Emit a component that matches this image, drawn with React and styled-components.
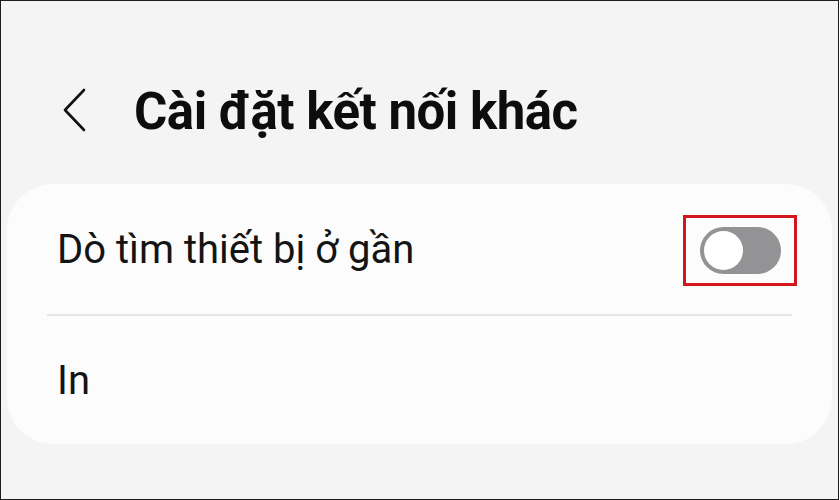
import React from "react";
import styled, { createGlobalStyle } from "styled-components";

const Global = createGlobalStyle`
  html, body { margin: 0; padding: 0; background: #ffffff; }
  body { font-family: Roboto, "Noto Sans", sans-serif; }
`;

const Frame = styled.div`
  box-sizing: border-box;
  width: 839px;
  height: 500px;
  border: 1px solid #1c1c1c;
  background: #f4f4f4;
  overflow: hidden;
  display: flex;
  flex-direction: column;
`;

const Header = styled.header`
  height: 183px;
  display: flex;
  align-items: center;
  padding: 38px 0 0 59px;
  box-sizing: border-box;
`;

const BackButton = styled.button`
  width: 28px;
  height: 44px;
  padding: 0;
  border: 0;
  background: transparent;
  display: flex;
  align-items: center;
  justify-content: center;
  margin-right: 46px;
  margin-top: -4px;
  svg { display: block; }
`;

const Title = styled.h1`
  margin: 0;
  font-family: Roboto, "Noto Sans", sans-serif;
  font-weight: 700;
  font-size: 51px;
  letter-spacing: -0.5px;
  color: #0d0d0d;
`;

const Card = styled.section`
  margin: 0 6px;
  background: #fcfcfc;
  border-radius: 46px;
  display: flex;
  flex-direction: column;
  padding: 0 40px;
`;

const Row = styled.div`
  height: ${p => p.$h}px;
  display: flex;
  align-items: center;
  justify-content: space-between;
  padding-left: 10px;
  border-bottom: ${p => (p.$divider ? "2px solid #e6e6ea" : "none")};
`;

const Label = styled.span`
  font-family: Roboto, "Noto Sans", sans-serif;
  font-size: 40px;
  font-weight: 400;
  color: #141414;
`;

const Highlight = styled.div`
  box-sizing: border-box;
  width: 114px;
  height: 71px;
  border: 3px solid #d4161d;
  display: flex;
  align-items: center;
  justify-content: center;
  margin-right: -5px;
  margin-top: 2px;
`;

const Track = styled.div`
  box-sizing: border-box;
  width: 81px;
  height: 47px;
  border-radius: 24px;
  background: #939396;
  padding: 4px;
  display: flex;
  align-items: center;
`;

const Knob = styled.div`
  width: 39px;
  height: 39px;
  border-radius: 50%;
  background: #ffffff;
`;

export default function App() {
  return (
    <>
      <Global />
      <Frame>
        <Header>
          <BackButton aria-label="Back">
            <svg width="24" height="44" viewBox="0 0 24 44">
              <path d="M22 2 L3 22 L22 42" fill="none" stroke="#111" strokeWidth="2.6" strokeLinecap="round" strokeLinejoin="round" />
            </svg>
          </BackButton>
          <Title>Cài đặt kết nối khác</Title>
        </Header>
        <Card>
          <Row $h={130} $divider>
            <Label>Dò tìm thiết bị ở gần</Label>
            <Highlight>
              <Track>
                <Knob />
              </Track>
            </Highlight>
          </Row>
          <Row $h={128}>
            <Label>In</Label>
          </Row>
        </Card>
      </Frame>
    </>
  );
}
